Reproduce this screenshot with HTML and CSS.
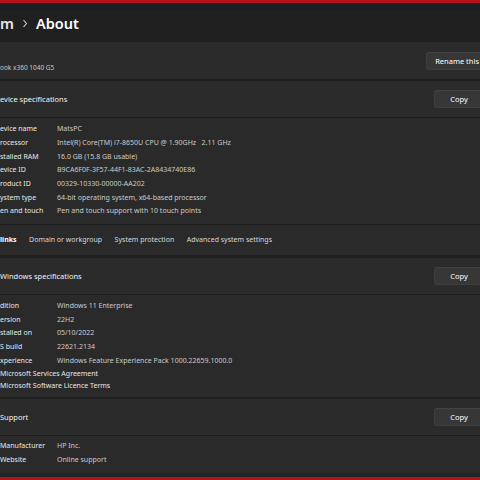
FILE: index.html
```html
<!DOCTYPE html>
<html lang="en">
<head>
<meta charset="utf-8">
<title>About</title>
<link rel="stylesheet" href="styles.css">
</head>
<body>
<div class="frame">
  <div class="redline"></div>
  <div class="band"></div>
  <div class="title">
    <span class="crumb">m</span>
    <svg class="chev" width="6" height="9" viewBox="0 0 6 9"><path d="M1.5 1 L4.5 4.5 L1.5 8" fill="none" stroke="#cfcfcf" stroke-width="1.1"/></svg>
    <span class="page">About</span>
  </div>

  <div class="card namecard">
    <span class="model">ook x360 1040 G5</span>
    <span class="btn rename">Rename this</span>
  </div>

  <div class="group">
    <div class="card head">
      <span class="htext">evice specifications</span>
      <span class="btn copy">Copy</span>
    </div>
    <div class="details dev">
      <div class="row"><span class="lab">evice name</span><span class="val">MatsPC</span></div>
      <div class="row"><span class="lab">rocessor</span><span class="val">Intel(R) Core(TM) i7-8650U CPU @ 1.90GHz&nbsp;&nbsp;&nbsp;2.11 GHz</span></div>
      <div class="row"><span class="lab">stalled RAM</span><span class="val">16.0 GB (15.8 GB usable)</span></div>
      <div class="row"><span class="lab">evice ID</span><span class="val">B9CA6F0F-3F57-44F1-83AC-2A8434740E86</span></div>
      <div class="row"><span class="lab">roduct ID</span><span class="val">00329-10330-00000-AA202</span></div>
      <div class="row"><span class="lab">ystem type</span><span class="val">64-bit operating system, x64-based processor</span></div>
      <div class="row"><span class="lab">en and touch</span><span class="val">Pen and touch support with 10 touch points</span></div>
    </div>
    <div class="links">
      <span class="ltitle">links</span>
      <span class="link">Domain or workgroup</span>
      <span class="link">System protection</span>
      <span class="link">Advanced system settings</span>
    </div>
  </div>

  <div class="group g3">
    <div class="card head">
      <span class="htext">Windows specifications</span>
      <span class="btn copy">Copy</span>
    </div>
    <div class="details win">
      <div class="row"><span class="lab">dition</span><span class="val">Windows 11 Enterprise</span></div>
      <div class="row"><span class="lab">ersion</span><span class="val">22H2</span></div>
      <div class="row"><span class="lab">stalled on</span><span class="val">05/10/2022</span></div>
      <div class="row"><span class="lab">S build</span><span class="val">22621.2134</span></div>
      <div class="row"><span class="lab">xperience</span><span class="val">Windows Feature Experience Pack 1000.22659.1000.0</span></div>
      <div class="row lrow"><span class="lab">Microsoft Services Agreement</span></div>
      <div class="row lrow"><span class="lab">Microsoft Software Licence Terms</span></div>
    </div>
  </div>

  <div class="group g4">
    <div class="card head">
      <span class="htext">Support</span>
      <span class="btn copy">Copy</span>
    </div>
    <div class="details sup">
      <div class="row"><span class="lab">Manufacturer</span><span class="val">HP Inc.</span></div>
      <div class="row"><span class="lab">Website</span><span class="val">Online support</span></div>
    </div>
  </div>

  <div class="band bottom"></div>
  <div class="redline"></div>
</div>
</body>
</html>
```

FILE: styles.css
```css
* { box-sizing: border-box; }
html, body { margin: 0; padding: 0; }
body {
  background: #202020;
  width: 480px;
  height: 480px;
  overflow: hidden;
  font-family: "Noto Sans", "Open Sans", sans-serif;
  color: #e8e8e8;
  font-size: 7px;
}
.frame {
  display: flex;
  flex-direction: column;
  height: 480px;
  overflow: hidden;
}
.redline { height: 3px; background: #b3121b; flex: none; }
.band { height: 7px; background: #1b1f24; flex: none; }
.band.bottom { height: 4px; background: #1e2428; }

.title {
  height: 32px;
  flex: none;
  display: flex;
  align-items: center;
  font-size: 14.5px;
  font-weight: 600;
  color: #ffffff;
  padding-bottom: 7px;
}
.crumb { color: #e6e6e6; flex: none; width: 22px; }
.chev { flex: none; margin-right: 8px; margin-top: 1px; }

.card {
  background: #2b2b2b;
  display: flex;
  align-items: center;
  justify-content: space-between;
  flex: none;
}
.namecard {
  height: 37px;
  margin-bottom: 2px;
  padding-top: 12px;
  align-items: flex-start;
}
.model { color: #c6c6c6; font-size: 6.5px; margin-top: 9px; }
.btn {
  background: #373737;
  border: 1px solid #3e3e3e;
  border-top-color: #424242;
  border-radius: 3px;
  color: #ffffff;
  font-size: 7.5px;
  display: flex;
  align-items: center;
}
.rename {
  height: 18px;
  padding: 0 12px 0 8px;
  margin-right: -12px;
  margin-top: -2px;
}
.copy {
  height: 18px;
  width: 50px;
  justify-content: center;
  margin-right: -4px;
}
.head {
  height: 37px;
  border-bottom: 1px solid #1d1d1d;
}
.htext { font-size: 7.5px; color: #f2f2f2; }

.details {
  background: #2a2a2a;
  display: flex;
  flex-direction: column;
  flex: none;
}
.row {
  display: flex;
  height: 13.7px;
  align-items: center;
  white-space: nowrap;
}
.lab { width: 57px; color: #e8e8e8; flex: none; }
.val { color: #cacaca; }
.lrow .lab { width: auto; }
.dev { height: 107px; padding-top: 4px; border-bottom: 1px solid #1d1d1d; }
.links {
  background: #2a2a2a;
  height: 30px;
  display: flex;
  align-items: center;
  gap: 12.5px;
  font-size: 7px;
  color: #d8d8d8;
  flex: none;
  padding-bottom: 1px;
}
.ltitle { font-weight: 700; color: #ffffff; }
.g3 { margin-top: 3px; }
.win { height: 102px; padding-top: 4px; }
.win .row { height: 13.6px; }
.win .lrow { height: 12.4px; }
.g4 { margin-top: 2px; }
.sup { height: 37px; padding-top: 3px; }
```
